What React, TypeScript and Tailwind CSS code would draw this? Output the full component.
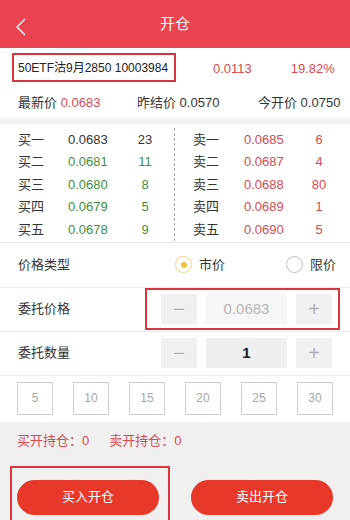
import React from "react";

const font = { fontFamily: '"Liberation Sans", "Noto Sans CJK SC", sans-serif' };

const bids = [
  { label: "买一", price: "0.0683", qty: "23", color: "text-[#333]" },
  { label: "买二", price: "0.0681", qty: "11", color: "text-[#3f8f38]" },
  { label: "买三", price: "0.0680", qty: "8", color: "text-[#3f8f38]" },
  { label: "买四", price: "0.0679", qty: "5", color: "text-[#3f8f38]" },
  { label: "买五", price: "0.0678", qty: "9", color: "text-[#3f8f38]" },
];

const asks = [
  { label: "卖一", price: "0.0685", qty: "6" },
  { label: "卖二", price: "0.0687", qty: "4" },
  { label: "卖三", price: "0.0688", qty: "80" },
  { label: "卖四", price: "0.0689", qty: "1" },
  { label: "卖五", price: "0.0690", qty: "5" },
];

const Stepper = ({ value, dim, boxed }: { value: string; dim?: boolean; boxed?: boolean }) => (
  <div
    className={`ml-[145px] flex h-[42px] w-[195px] items-center gap-[9px] border-2 pl-[14px] ${
      boxed ? "border-[#d8353d]" : "border-transparent"
    }`}
  >
    <div className="flex h-[30px] w-[36px] items-center justify-center bg-[#f0f0f0] text-[20px] text-[#b0b0b0]">−</div>
    <div
      className={`flex h-[30px] w-[81px] items-center justify-center text-[15px] ${
        dim ? "bg-[#f6f6f6] text-[#b5b5b5]" : "bg-[#efefef] font-bold text-[#222]"
      }`}
    >
      {value}
    </div>
    <div className="flex h-[30px] w-[36px] items-center justify-center bg-[#f0f0f0] text-[20px] text-[#b0b0b0]">+</div>
  </div>
);

export default function App() {
  return (
    <div className="h-[520px] w-[350px] overflow-hidden bg-white text-[13px] text-[#333]" style={font}>
      {/* header */}
      <div className="relative flex h-12 items-center justify-center bg-[#e9444f]">
        <svg className="absolute left-[15px] top-[18px]" width="12" height="18" viewBox="0 0 12 18">
          <polyline points="10,1 2,9 10,17" fill="none" stroke="white" strokeWidth="1.4" />
        </svg>
        <span className="text-[15px] text-white">开仓</span>
      </div>

      {/* contract */}
      <div className="flex h-10 items-start pt-[5px]">
        <div className="ml-[12px] flex h-[29px] w-[164px] items-center whitespace-nowrap border-2 border-[#d8353d] pl-[4px] text-[12px] text-[#222]">
          50ETF沽9月2850 10003984
        </div>
        <span className="ml-[37px] mt-[6px] text-[#d84a4f]">0.0113</span>
        <span className="ml-[39px] mt-[6px] text-[#d84a4f]">19.82%</span>
      </div>

      {/* summary */}
      <div className="flex h-[30px] items-center pl-[18px]">
        <div className="w-[119px]">
          最新价 <span className="text-[#d84a4f]">0.0683</span>
        </div>
        <div className="w-[121px]">昨结价 0.0570</div>
        <div>今开价 0.0750</div>
      </div>
      <div className="h-[6px] bg-[#f2f2f2]" />

      {/* order book */}
      <div className="flex border-b border-[#e6e6e6] pb-[1px] pt-[4px]">
        <div className="w-[174px]">
          {bids.map((b) => (
            <div key={b.label} className="flex h-[22.5px] items-center">
              <span className="ml-[18px] w-[50px]">{b.label}</span>
              <span className={`w-[60px] ${b.color}`}>{b.price}</span>
              <span className={`w-[34px] text-center ${b.color}`}>{b.qty}</span>
            </div>
          ))}
        </div>
        <div className="border-l border-dashed border-[#aaa]" />
        <div className="flex-1">
          {asks.map((a) => (
            <div key={a.label} className="flex h-[22.5px] items-center">
              <span className="ml-[18px] w-[51px]">{a.label}</span>
              <span className="w-[60px] text-[#d84a4f]">{a.price}</span>
              <span className="w-[30px] text-center text-[#d84a4f]">{a.qty}</span>
            </div>
          ))}
        </div>
      </div>

      {/* price type */}
      <div className="flex h-[45px] items-center border-b border-[#ececec] pl-[18px]">
        <span className="w-[157px]">价格类型</span>
        <div className="flex h-[17px] w-[17px] items-center justify-center rounded-full border border-[#f0d386]">
          <div className="h-[6px] w-[6px] rounded-full bg-[#efc23a]" />
        </div>
        <span className="ml-[7px]">市价</span>
        <div className="ml-[61px] h-[17px] w-[17px] rounded-full border border-[#bdbdbd]" />
        <span className="ml-[7px]">限价</span>
      </div>

      {/* price */}
      <div className="relative flex h-[44px] items-center border-b border-[#ececec]">
        <span className="absolute left-[18px]">委托价格</span>
        <Stepper value="0.0683" dim boxed />
      </div>

      {/* quantity */}
      <div className="relative flex h-[44px] items-center border-b border-[#ececec]">
        <span className="absolute left-[18px]">委托数量</span>
        <Stepper value="1" />
      </div>

      {/* quick quantities */}
      <div className="flex h-[46px] items-start gap-[20px] pl-[17px] pt-[6px]">
        {["5", "10", "15", "20", "25", "30"].map((n) => (
          <div
            key={n}
            className="flex h-[33px] w-[36px] items-center justify-center border border-[#cfcfcf] text-[12px] text-[#a5a5a5]"
          >
            {n}
          </div>
        ))}
      </div>

      {/* bottom */}
      <div className="bg-[#f0f0f0] pl-[17px] pt-[10px]">
        <div className="flex h-[18px] items-center text-[#d84a4f]">
          <span>买开持仓：0</span>
          <span className="ml-[20px]">卖开持仓：0</span>
        </div>
        <div className="mt-[16px] flex">
          <div className="-ml-[7px] border-2 border-[#d8353d] pb-[20px] pl-[5px] pr-[9px] pt-[12px]">
            <button className="flex h-[35px] w-[142px] items-center justify-center rounded-full bg-[#e8382a] text-[13px] text-white">
              买入开仓
            </button>
          </div>
          <div className="ml-[21px] pt-[14px]">
            <button className="flex h-[35px] w-[142px] items-center justify-center rounded-full bg-[#e8382a] text-[13px] text-white">
              卖出开仓
            </button>
          </div>
        </div>
      </div>
    </div>
  );
}
